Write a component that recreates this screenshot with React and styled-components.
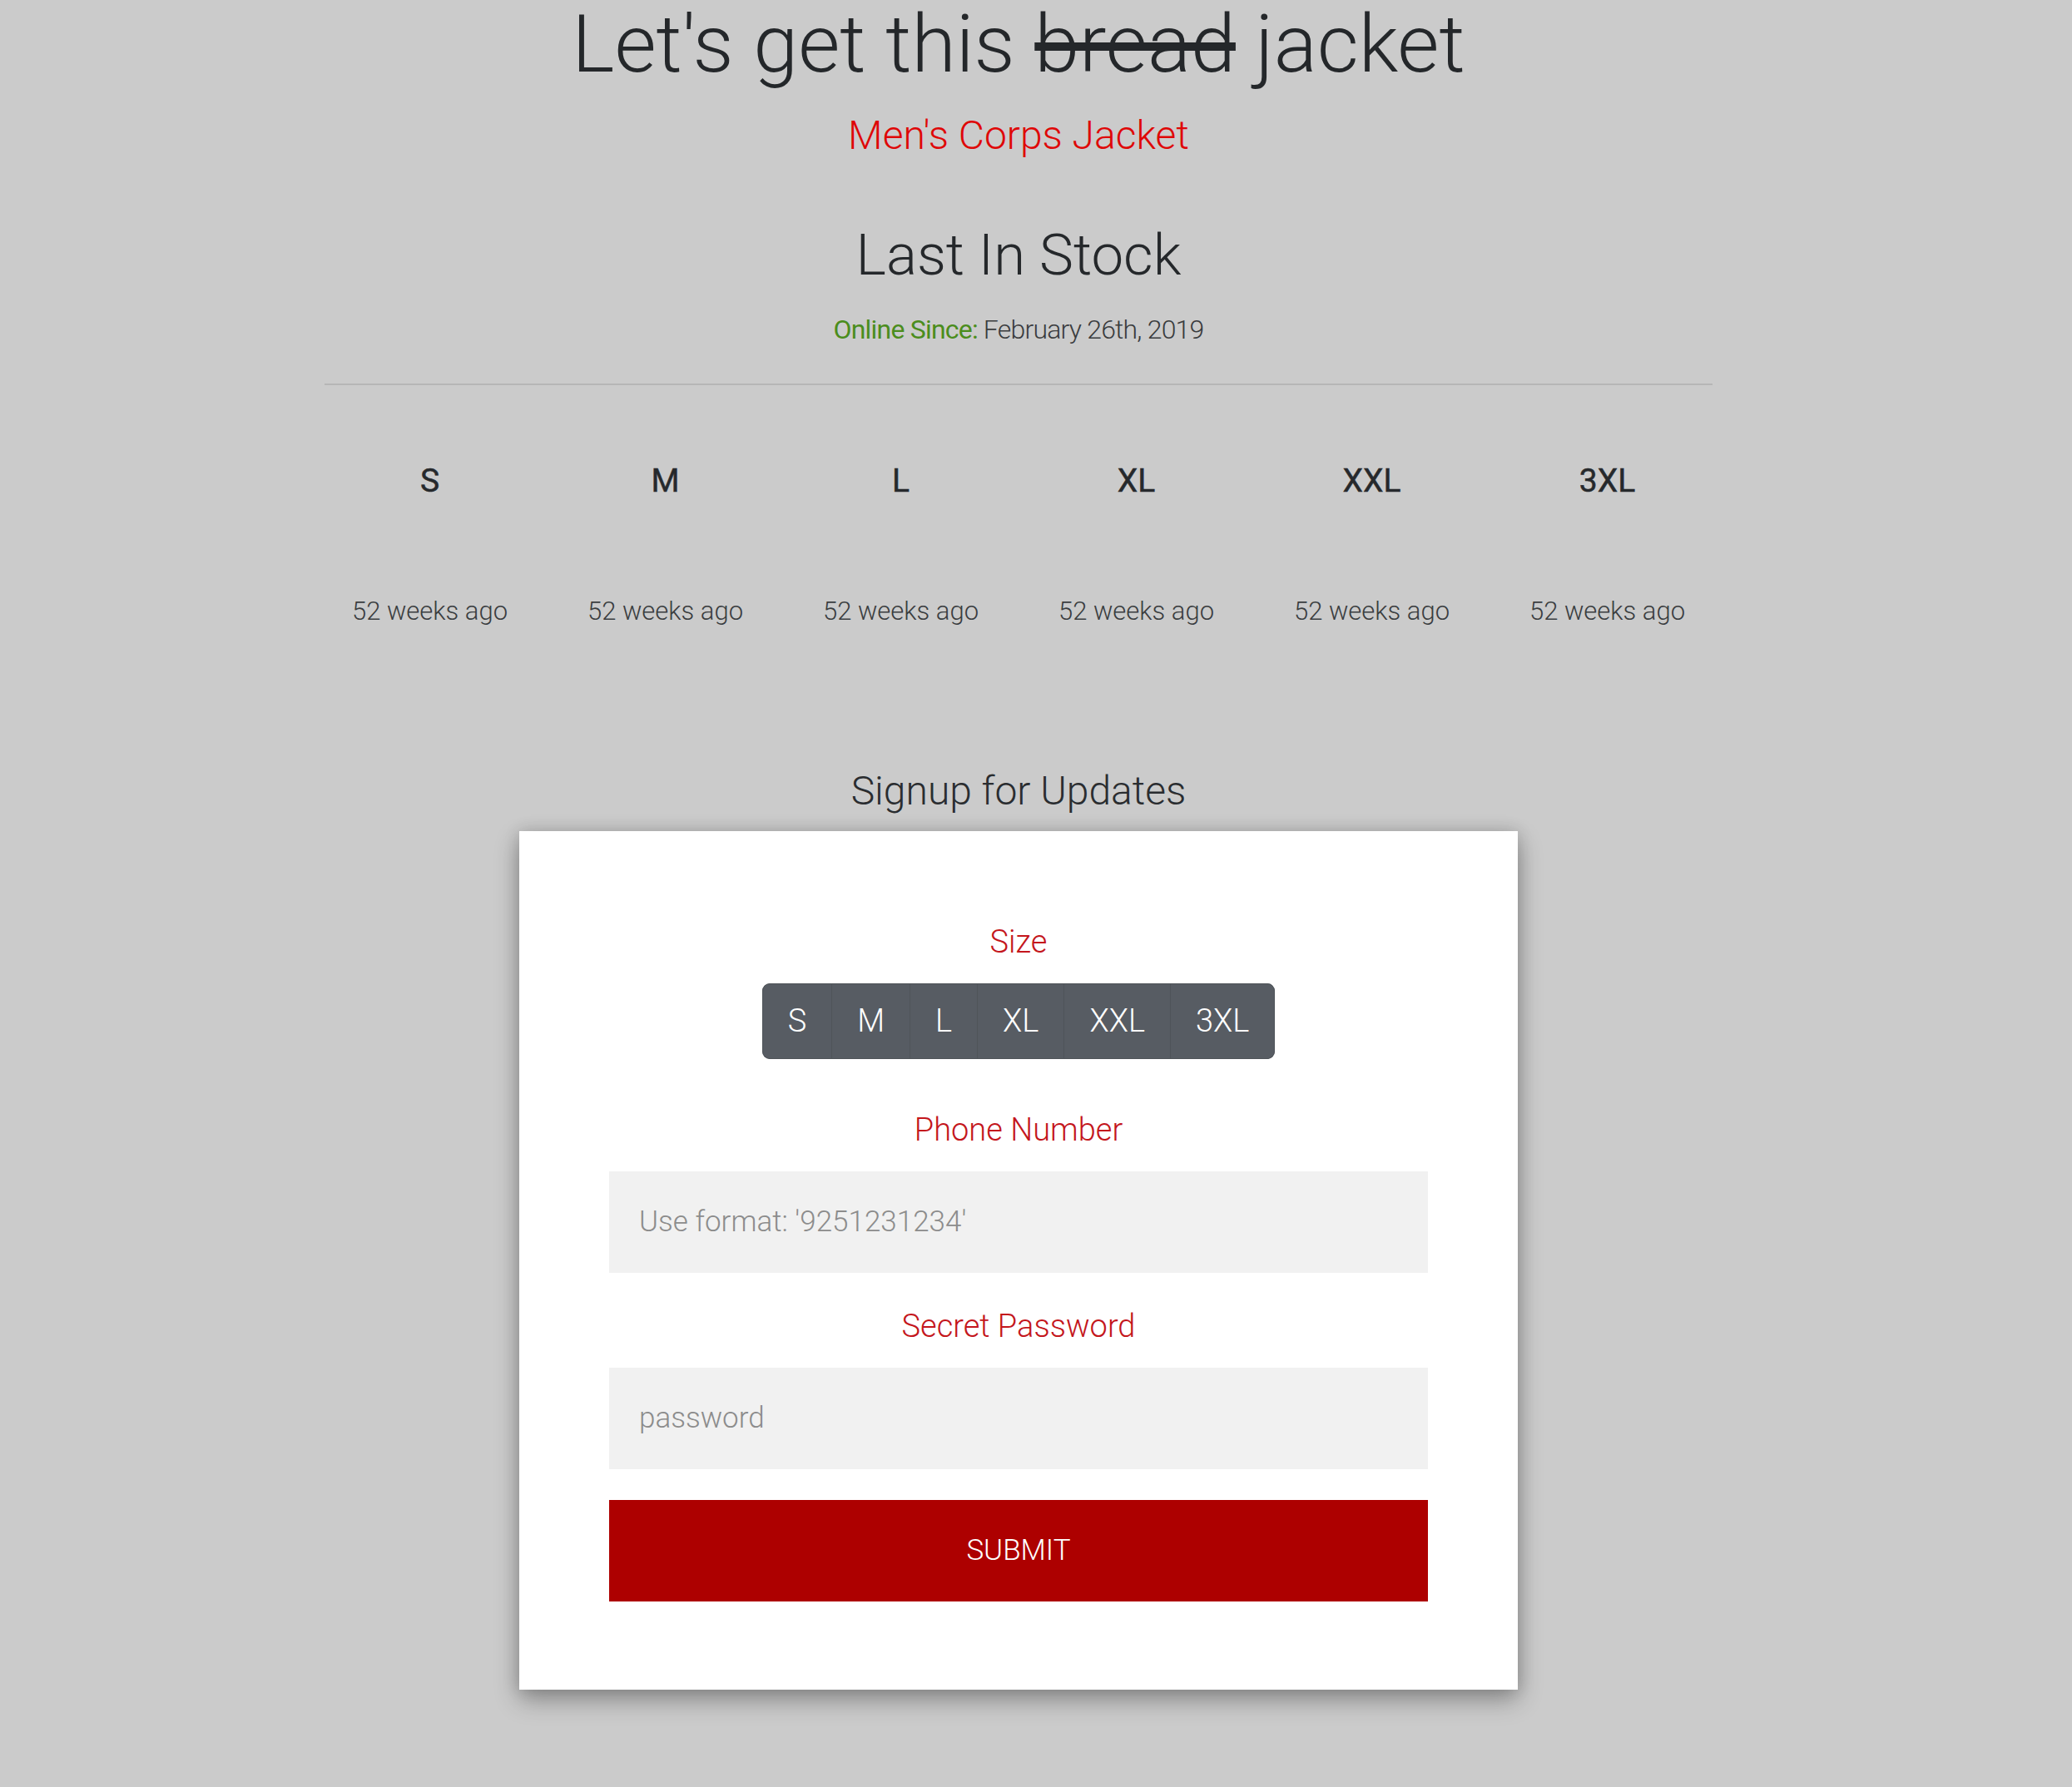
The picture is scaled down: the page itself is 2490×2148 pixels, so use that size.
import * as React from "react";
import styled, { createGlobalStyle, css } from "styled-components";

const SIZES = ["S", "M", "L", "XL", "XXL", "3XL"];

// thin text: prefer a real light face when one is installed
const light = css`
  font-family: "Roboto Light", Roboto, "Liberation Sans", Arial, sans-serif;
  font-weight: 300;
`;

const GlobalStyle = createGlobalStyle`
  html, body {
    margin: 0;
    padding: 0;
    background: #cbcbcb;
  }
  body {
    font-family: Roboto, "Liberation Sans", Arial, sans-serif;
    color: #212529;
    min-height: 100vh;
  }
  * {
    box-sizing: border-box;
  }
`;

export default function App() {
  return (
    <Page>
      <GlobalStyle />
      <Title>
        Let's get this <Struck>bread</Struck> jacket
      </Title>
      <ProductName>Men's Corps Jacket</ProductName>

      <SectionTitle>Last In Stock</SectionTitle>
      <OnlineSince>
        <span className="label">Online Since:</span> February 26th, 2019
      </OnlineSince>

      <Divider />

      <StockGrid>
        {SIZES.map((size) => (
          <StockCell key={size}>
            <StockSize>{size}</StockSize>
            <StockTime>52 weeks ago</StockTime>
          </StockCell>
        ))}
      </StockGrid>

      <SignupTitle>Signup for Updates</SignupTitle>
      <Card>
        <FieldLabel>Size</FieldLabel>
        <ButtonGroup>
          {SIZES.map((size) => (
            <SizeButton key={size} type="button">
              {size}
            </SizeButton>
          ))}
        </ButtonGroup>

        <FieldLabel $gap={57}>Phone Number</FieldLabel>
        <TextInput type="text" placeholder="Use format: '9251231234'" />

        <FieldLabel $gap={36}>Secret Password</FieldLabel>
        <TextInput type="password" placeholder="password" />

        <SubmitButton type="button">Submit</SubmitButton>
      </Card>
    </Page>
  );
}

const Page = styled.div`
  display: flex;
  flex-direction: column;
  align-items: center;
  padding: 0 42px 118px 0;
  text-align: center;
`;

const Title = styled.h1`
  margin: 0;
  ${light};
  font-size: 97px;
  line-height: 1.1;
  color: #24272a;
`;

const Struck = styled.span`
  text-decoration: line-through;
  text-decoration-thickness: 10px;
`;

const ProductName = styled.div`
  margin-top: 27px;
  ${light};
  font-size: 48px;
  line-height: 1.2;
  color: #df0707;
`;

const SectionTitle = styled.h2`
  margin: 75px 0 0;
  ${light};
  font-size: 69px;
  line-height: 1.2;
  color: #25282b;
`;

const OnlineSince = styled.div`
  margin-top: 23px;
  ${light};
  font-size: 32px;
  letter-spacing: -0.8px;
  line-height: 1.5;
  color: #3a3c3e;
  .label {
    font-family: Roboto, "Liberation Sans", Arial, sans-serif;
    font-weight: 400;
    color: #4b8d1d;
  }
`;

const Divider = styled.hr`
  margin: 41px 0 0;
  width: 1668px;
  height: 0;
  border: 0;
  border-top: 2px solid rgba(0, 0, 0, 0.1);
`;

const StockGrid = styled.div`
  margin-top: 92px;
  width: 1698px;
  display: grid;
  grid-template-columns: repeat(6, 1fr);
`;

const StockCell = styled.div`
  display: flex;
  flex-direction: column;
  align-items: center;
`;

const StockSize = styled.div`
  font-size: 39px;
  line-height: 1.2;
  font-weight: 400;
  -webkit-text-stroke: 0.5px currentColor;
  color: #26292c;
`;

const StockTime = styled.div`
  margin-top: 110px;
  ${light};
  font-size: 31px;
  line-height: 1.5;
  color: #3a3d40;
`;

const SignupTitle = styled.h3`
  margin: 164px 0 0;
  ${light};
  font-size: 48px;
  line-height: 1.2;
  color: #2a2d30;
`;

const Card = styled.div`
  margin-top: 19px;
  width: 1200px;
  padding: 105px 108px 106px;
  display: flex;
  flex-direction: column;
  align-items: center;
  background: #ffffff;
  box-shadow: 0 12px 28px rgba(0, 0, 0, 0.32), 0 0 18px rgba(0, 0, 0, 0.14);
`;

const FieldLabel = styled.label`
  margin-top: ${(p) => p.$gap || 0}px;
  margin-bottom: 21px;
  ${light};
  font-size: 38px;
  line-height: 57px;
  color: #c4161c;
`;

const ButtonGroup = styled.div`
  display: inline-flex;
  border-radius: 9px;
  overflow: hidden;
  background: #575c63;
`;

const SizeButton = styled.button`
  margin: 0;
  padding: 16px 30px;
  border: 1px solid #4f5459;
  border-left-width: 0;
  background: #575c63;
  ${light};
  font-size: 38px;
  line-height: 57px;
  color: #ffffff;
  cursor: pointer;
  &:first-child {
    border-left-width: 1px;
    border-radius: 9px 0 0 9px;
  }
  &:last-child {
    border-radius: 0 9px 9px 0;
  }
`;

const TextInput = styled.input`
  width: 100%;
  height: 122px;
  padding: 0 36px;
  border: none;
  outline: none;
  background: #f1f1f1;
  ${light};
  font-size: 35px;
  color: #333;
  &::placeholder {
    color: #8c8c8c;
  }
`;

const SubmitButton = styled.button`
  margin-top: 37px;
  width: 100%;
  height: 122px;
  border: none;
  background: #ad0000;
  ${light};
  font-size: 35px;
  text-transform: uppercase;
  color: #ffffff;
  cursor: pointer;
`;
